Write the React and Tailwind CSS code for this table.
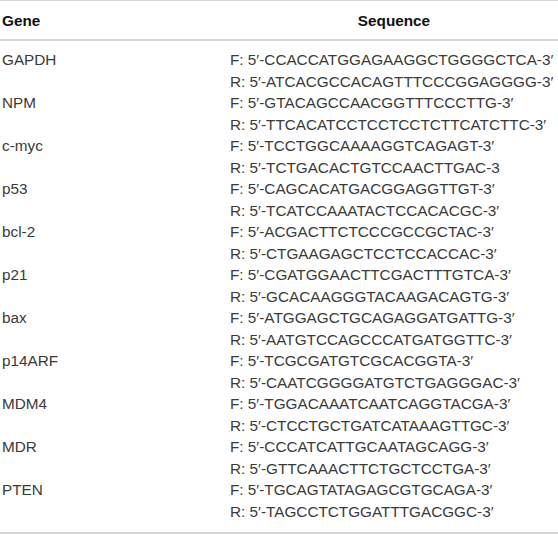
import React from 'react';

const rows = [
    ['GAPDH', 'CCACCATGGAGAAGGCTGGGGCTCA-3′', 'ATCACGCCACAGTTTCCCGGAGGGG-3′'],
    ['NPM', 'GTACAGCCAACGGTTTCCCTTG-3′', 'TTCACATCCTCCTCCTCTTCATCTTC-3′'],
    ['c-myc', 'TCCTGGCAAAAGGTCAGAGT-3′', 'TCTGACACTGTCCAACTTGAC-3'],
    ['p53', 'CAGCACATGACGGAGGTTGT-3′', 'TCATCCAAATACTCCACACGC-3′'],
    ['bcl-2', 'ACGACTTCTCCCGCCGCTAC-3′', 'CTGAAGAGCTCCTCCACCAC-3′'],
    ['p21', 'CGATGGAACTTCGACTTTGTCA-3′', 'GCACAAGGGTACAAGACAGTG-3′'],
    ['bax', 'ATGGAGCTGCAGAGGATGATTG-3′', 'AATGTCCAGCCCATGATGGTTC-3′'],
    ['p14ARF', 'TCGCGATGTCGCACGGTA-3′', 'CAATCGGGGATGTCTGAGGGAC-3′'],
    ['MDM4', 'TGGACAAATCAATCAGGTACGA-3′', 'CTCCTGCTGATCATAAAGTTGC-3′'],
    ['MDR', 'CCCATCATTGCAATAGCAGG-3′', 'GTTCAAACTTCTGCTCCTGA-3′'],
    ['PTEN', 'TGCAGTATAGAGCGTGCAGA-3′', 'TAGCCTCTGGATTTGACGGC-3′'],
];

const App = () => {
    return (
        <div className="w-[558px] h-[534px] bg-white text-[#3a3a3a] text-[15.3px] font-['Liberation_Sans',Arial,sans-serif]">
            <div className="border-t border-b-2 border-[#d4d4d4] flex items-center h-[41px] pt-[2px]">
                <div className="w-[230px] pl-[2px] font-bold text-[#111]">Gene</div>
                <div className="flex-1 text-center font-bold text-[#111]">Sequence</div>
            </div>
            <div className="pt-[8px] pb-[10px] border-b-2 border-[#d4d4d4] leading-[21.5px]">
                {rows.map(([gene, f, r]) => (
                    <div key={gene} className="flex">
                        <div className="w-[230px] pl-[2px]">{gene}</div>
                        <div className="flex-1">
                            <div>F: 5′-{f}</div>
                            <div>R: 5′-{r}</div>
                        </div>
                    </div>
                ))}
            </div>
        </div>
    );
};

export default App;
